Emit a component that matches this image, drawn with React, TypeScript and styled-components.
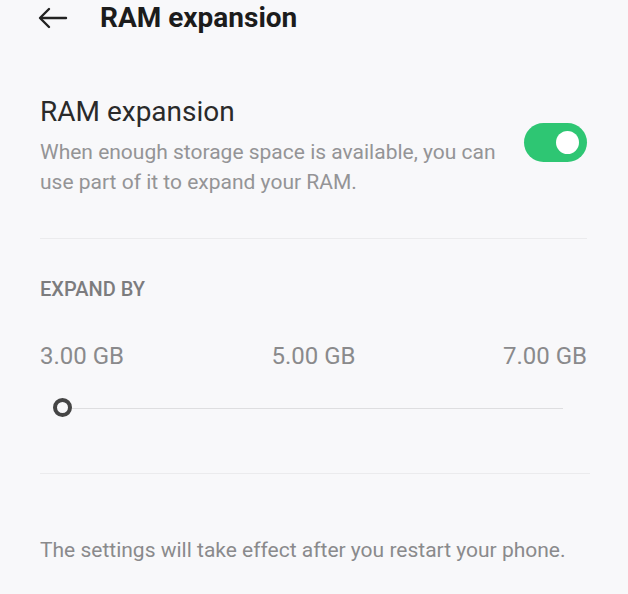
import React from "react";
import styled, { createGlobalStyle } from "styled-components";

const Global = createGlobalStyle`
  html, body { margin: 0; padding: 0; background: #f8f8fa; }
  body { font-family: Roboto, "Noto Sans", sans-serif; }
`;

const Page = styled.div`
  width: 628px;
  height: 594px;
  background: #f8f8fa;
  overflow: hidden;
  display: flex;
  flex-direction: column;
`;

const TopBar = styled.div`
  height: 36px;
  display: flex;
  align-items: center;
  padding-left: 38px;
  gap: 32px;
`;

const BackButton = styled.button`
  border: none;
  background: none;
  padding: 0;
  width: 30px;
  height: 22px;
  display: flex;
  align-items: center;
  color: #222;
`;

const Title = styled.h1`
  margin: 0;
  font-size: 28px;
  font-weight: 700;
  color: #1c1c1c;
  line-height: 36px;
`;

const Content = styled.div`
  padding: 0 41px 0 40px;
  display: flex;
  flex-direction: column;
`;

const SwitchRow = styled.div`
  display: flex;
  align-items: flex-start;
  justify-content: space-between;
  padding-top: 60px;
  padding-bottom: 41px;
  border-bottom: 1px solid #ebebed;
`;

const TextCol = styled.div`
  display: flex;
  flex-direction: column;
  white-space: nowrap;
`;

const RowTitle = styled.div`
  font-size: 28px;
  color: #2a2a2a;
  line-height: 32px;
`;

const Desc = styled.div`
  margin-top: 9px;
  font-size: 21px;
  line-height: 30px;
  color: #949496;
`;

const Toggle = styled.div<{ $on: boolean }>`
  margin-top: 27px;
  width: 63px;
  height: 39px;
  border-radius: 20px;
  background: ${(p) => (p.$on ? "#2ec673" : "#ccc")};
  position: relative;
  flex-shrink: 0;
`;

const Knob = styled.div`
  position: absolute;
  right: 8px;
  top: 8px;
  width: 23px;
  height: 23px;
  border-radius: 50%;
  background: #fff;
`;

const SectionLabel = styled.div`
  margin-top: 40px;
  font-size: 20px;
  font-weight: 500;
  color: #7c7c7e;
  line-height: 20px;
`;

const ValueRow = styled.div`
  margin-top: 45px;
  display: flex;
  justify-content: space-between;
  font-size: 24px;
  color: #8a8a8c;
  line-height: 24px;
`;

const SliderWrap = styled.div`
  margin-top: 30px;
  height: 20px;
  position: relative;
  display: flex;
  align-items: center;
  padding-left: 13px;
`;

const Track = styled.div`
  height: 1px;
  background: #dedee0;
  width: 510px;
`;

const Thumb = styled.div`
  position: absolute;
  left: 13px;
  top: 0px;
  width: 11px;
  height: 11px;
  border: 4px solid #454545;
  border-radius: 50%;
  background: #f8f8fa;
`;

const Divider = styled.div`
  margin-top: 55px;
  height: 1px;
  background: #ebebed;
  margin-right: -3px;
`;

const Footer = styled.div`
  margin-top: 64px;
  font-size: 21px;
  color: #8a8a8c;
  line-height: 24px;
  white-space: nowrap;
`;

export default function App() {
  return (
    <Page>
      <Global />
      <TopBar>
        <BackButton aria-label="Back">
          <svg width="30" height="22" viewBox="0 0 30 22" fill="none" stroke="#222" strokeWidth="2.4" strokeLinecap="round" strokeLinejoin="round">
            <path d="M28 11H3" />
            <path d="M11 2L2 11L11 20" />
          </svg>
        </BackButton>
        <Title>RAM expansion</Title>
      </TopBar>
      <Content>
        <SwitchRow>
          <TextCol>
            <RowTitle>RAM expansion</RowTitle>
            <Desc>
              When enough storage space is available, you can
              <br />
              use part of it to expand your RAM.
            </Desc>
          </TextCol>
          <Toggle $on>
            <Knob />
          </Toggle>
        </SwitchRow>
        <SectionLabel>EXPAND BY</SectionLabel>
        <ValueRow>
          <span>3.00 GB</span>
          <span>5.00 GB</span>
          <span>7.00 GB</span>
        </ValueRow>
        <SliderWrap>
          <Track />
          <Thumb />
        </SliderWrap>
        <Divider />
        <Footer>The settings will take effect after you restart your phone.</Footer>
      </Content>
    </Page>
  );
}
